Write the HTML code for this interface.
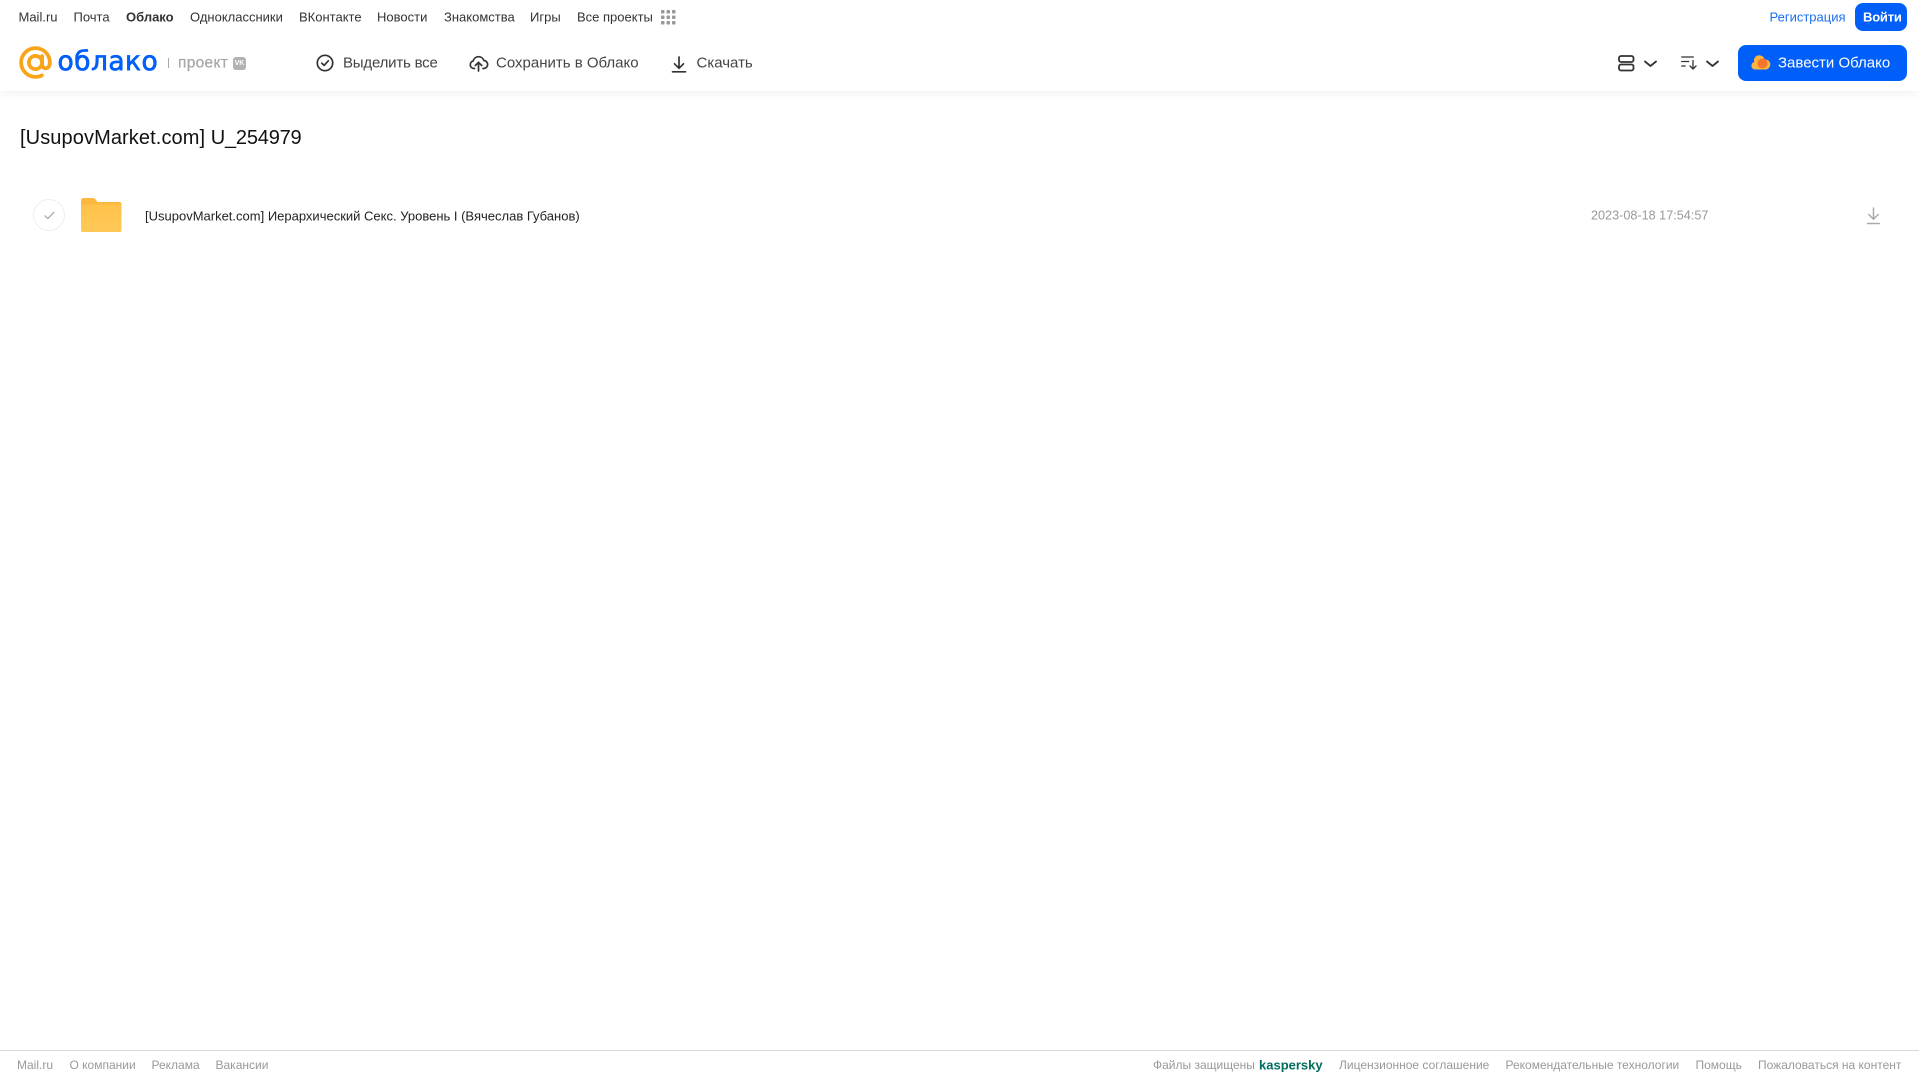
<!DOCTYPE html>
<html lang="ru"><head><meta charset="utf-8"><title>Облако</title>
<style>
html,body{margin:0;padding:0;width:1919px;height:1079px;overflow:hidden;background:#fff;font-family:"Liberation Sans",sans-serif;}
body{position:relative}
.t{position:absolute;white-space:nowrap;transform:translateY(-50%);line-height:1}
.n{font-size:13px;color:#333;top:17px}
.h{font-size:15px;color:#444;top:63px}
.f{font-size:12px;color:#999;top:1064.5px}
svg{position:absolute;overflow:visible}
#hd{position:absolute;left:0;top:0;width:1919px;height:91px;background:#fff;box-shadow:0 2px 10px rgba(0,0,0,.06)}
.b{position:absolute;background:#005ff9;border-radius:8px}
</style></head><body>
<div id="hd"></div>
<span class="t n" style="left:18.5px">Mail.ru</span>
<span class="t n" style="left:73.5px">Почта</span>
<span class="t n" style="left:126px;font-weight:700">Облако</span>
<span class="t n" style="left:190px">Одноклассники</span>
<span class="t n" style="left:299px">ВКонтакте</span>
<span class="t n" style="left:377px">Новости</span>
<span class="t n" style="left:444px">Знакомства</span>
<span class="t n" style="left:530px">Игры</span>
<span class="t n" style="left:577px">Все проекты</span>
<svg style="left:661px;top:10px" width="15" height="15" fill="#999"><rect x="0" y="0" width="3.5" height="3.5" rx=".8"/><rect x="5.5" y="0" width="3.5" height="3.5" rx=".8"/><rect x="11" y="0" width="3.5" height="3.5" rx=".8"/><rect x="0" y="5.5" width="3.5" height="3.5" rx=".8"/><rect x="5.5" y="5.5" width="3.5" height="3.5" rx=".8"/><rect x="11" y="5.5" width="3.5" height="3.5" rx=".8"/><rect x="0" y="11" width="3.5" height="3.5" rx=".8"/><rect x="5.5" y="11" width="3.5" height="3.5" rx=".8"/><rect x="11" y="11" width="3.5" height="3.5" rx=".8"/></svg>
<span class="t n" style="left:1769.5px;color:#1a6ff0">Регистрация</span>
<div class="b" style="left:1855px;top:3px;width:52px;height:28px"></div>
<span class="t n" style="left:1863px;color:#fff;font-weight:700;letter-spacing:-.2px">Войти</span>

<svg style="left:18.5px;top:46px" width="33" height="33" viewBox="0 0 34 34" fill="none" stroke="#f9a51a" stroke-width="3.9" stroke-linecap="round"><circle cx="17" cy="17" r="6.8"/><path d="M23.800 10.500v8c0 2.800 1.500 4.500 3.700 4.500 2.500 0 4.300-2.500 4.300-6C31.800 8.800 25.200 2.200 17 2.200S2.200 8.800 2.200 17 8.800 31.800 17 31.800c2.500 0 4.500-.5 6.500-1.500"/></svg>
<span class="t" style="left:57.5px;top:62px;font-family:'DejaVu Sans',sans-serif;font-size:26.5px;color:#005ff9;-webkit-text-stroke:.7px #005ff9;letter-spacing:.45px">облако</span>
<div style="position:absolute;left:168px;top:58px;width:1px;height:10px;background:#aaa"></div>
<span class="t" style="left:178px;top:62.500px;font-size:15.500px;color:#a8a8a8;-webkit-text-stroke:.3px #a8a8a8;letter-spacing:.3px">проект</span>
<div style="position:absolute;left:233px;top:56.500px;width:13px;height:13px;border-radius:3px;background:#b2b2b2;color:#fff;font-size:7px;font-weight:700;line-height:13px;text-align:center">VK</div>

<svg style="left:316px;top:54px" width="18" height="18" fill="none" stroke="#333" stroke-width="1.700" stroke-linecap="round" stroke-linejoin="round"><circle cx="9" cy="9" r="7.700"/><path d="M5.800 9.200l2.300 2.200 4.200-4.600"/></svg>
<span class="t h" style="left:343px;letter-spacing:-.2px">Выделить все</span>
<svg style="left:469px;top:54px" width="19" height="18" fill="none" stroke="#333" stroke-width="1.700" stroke-linecap="round" stroke-linejoin="round"><path d="M5.500 14.500H5A3.800 3.800 0 0 1 4.200 7 5.500 5.500 0 0 1 14.800 6.500 4 4 0 0 1 14.500 14.500H14"/><path d="M9.500 17V8.500M6.300 11.500l3.200-3.200 3.200 3.200"/></svg>
<span class="t h" style="left:496px">Сохранить в Облако</span>
<svg style="left:671px;top:55.500px" width="16" height="17" fill="none" stroke="#333" stroke-width="1.700" stroke-linecap="round" stroke-linejoin="round"><path d="M8 1v11M3.500 7.800L8 12.300l4.500-4.500M1.500 15.800h13"/></svg>
<span class="t h" style="left:696.500px">Скачать</span>

<svg style="left:1618px;top:54.500px" width="16" height="17" fill="none" stroke="#333" stroke-width="1.800"><rect x="1" y="1" width="14.500" height="6" rx="2"/><rect x="1" y="9.500" width="14.500" height="6" rx="2"/></svg>
<svg style="left:1643.500px;top:60px" width="13" height="8" fill="none" stroke="#333" stroke-width="1.800" stroke-linecap="round" stroke-linejoin="round"><path d="M1 1.500l5.500 4.500L12 1.500"/></svg>
<svg style="left:1681px;top:56px" width="17" height="14" fill="none" stroke="#333" stroke-width="1.300" stroke-linecap="round" stroke-linejoin="round"><path d="M.700 1h11.600M.700 5.500h7M.700 10h3.500M12 4.500v8.500M9 10l3 3 3-3"/></svg>
<svg style="left:1705.500px;top:60px" width="13" height="8" fill="none" stroke="#333" stroke-width="1.800" stroke-linecap="round" stroke-linejoin="round"><path d="M1 1.500l5.500 4.500L12 1.500"/></svg>
<div class="b" style="left:1738px;top:45px;width:169px;height:36px"></div>
<svg style="left:1750.500px;top:54px" width="19" height="16"><path d="M4 15.500A3.800 3.800 0 0 1 3.300 8 5 5 0 0 1 9.500 1.500a5 5 0 0 1 4 4 5 5 0 0 1 1.500 10z" fill="#ffb43c"/><circle cx="11.500" cy="9.500" r="5" fill="#f5762a"/></svg>
<span class="t h" style="left:1778px;color:#fff;font-size:15px">Завести Облако</span>

<span class="t" style="left:20px;top:138px;font-size:20px;color:#111"><span style="letter-spacing:.1px">[UsupovMarket.com]</span> <span style="letter-spacing:-.2px">U_254979</span></span>

<div style="position:absolute;left:33px;top:199px;width:30px;height:30px;border:1px solid #eee;border-radius:50%"></div>
<svg style="left:43.500px;top:211px" width="11" height="9" fill="none" stroke="#aaa" stroke-width="1.300" stroke-linecap="round" stroke-linejoin="round"><path d="M1 4.800l2.800 2.800L9.800 1.500"/></svg>
<svg style="left:81px;top:198px" width="41" height="35"><defs><linearGradient id="g" x1="0" y1="0" x2="0" y2="1"><stop offset="0" stop-color="#ffc24a"/><stop offset="1" stop-color="#ffc957"/></linearGradient></defs><path d="M2.500 0h9c2 0 3 1 4 2.500l.8 1.500H38.500a2 2 0 0 1 2 2v6H0V2.500A2.500 2.500 0 0 1 2.500 0z" fill="#fdb93f"/><path d="M0 6.500h38.500a2 2 0 0 1 2 2v24a1.500 1.500 0 0 1-1.500 1.500H1.500A1.500 1.500 0 0 1 0 32.500z" fill="url(#g)"/></svg>
<span class="t" style="left:145px;top:215.500px;font-size:13px;color:#222">[UsupovMarket.com] Иерархический Секс. Уровень I (Вячеслав Губанов)</span>
<span class="t" style="left:1591px;top:216px;font-size:12.650px;color:#999">2023-08-18 17:54:57</span>
<svg style="left:1866px;top:206.500px" width="15" height="18" fill="none" stroke="#aaa" stroke-width="1.500" stroke-linecap="round" stroke-linejoin="round"><path d="M7.500 1v11M2.800 7.500l4.700 4.700 4.700-4.700M1.500 16.500h12"/></svg>

<div style="position:absolute;left:0;top:1050px;width:1919px;height:1px;background:#d9d9d9"></div>
<span class="t f" style="left:17px">Mail.ru</span>
<span class="t f" style="left:69.500px">О компании</span>
<span class="t f" style="left:151.500px">Реклама</span>
<span class="t f" style="left:215.500px">Вакансии</span>
<span class="t f" style="left:1153px">Файлы защищены</span>
<span class="t f" style="left:1259px;color:#006d5c;font-weight:700;font-size:13px">kaspersky</span>
<span class="t f" style="left:1339px">Лицензионное соглашение</span>
<span class="t f" style="left:1505.500px">Рекомендательные технологии</span>
<span class="t f" style="left:1695.500px">Помощь</span>
<span class="t f" style="left:1758px">Пожаловаться на контент</span>
</body></html>
